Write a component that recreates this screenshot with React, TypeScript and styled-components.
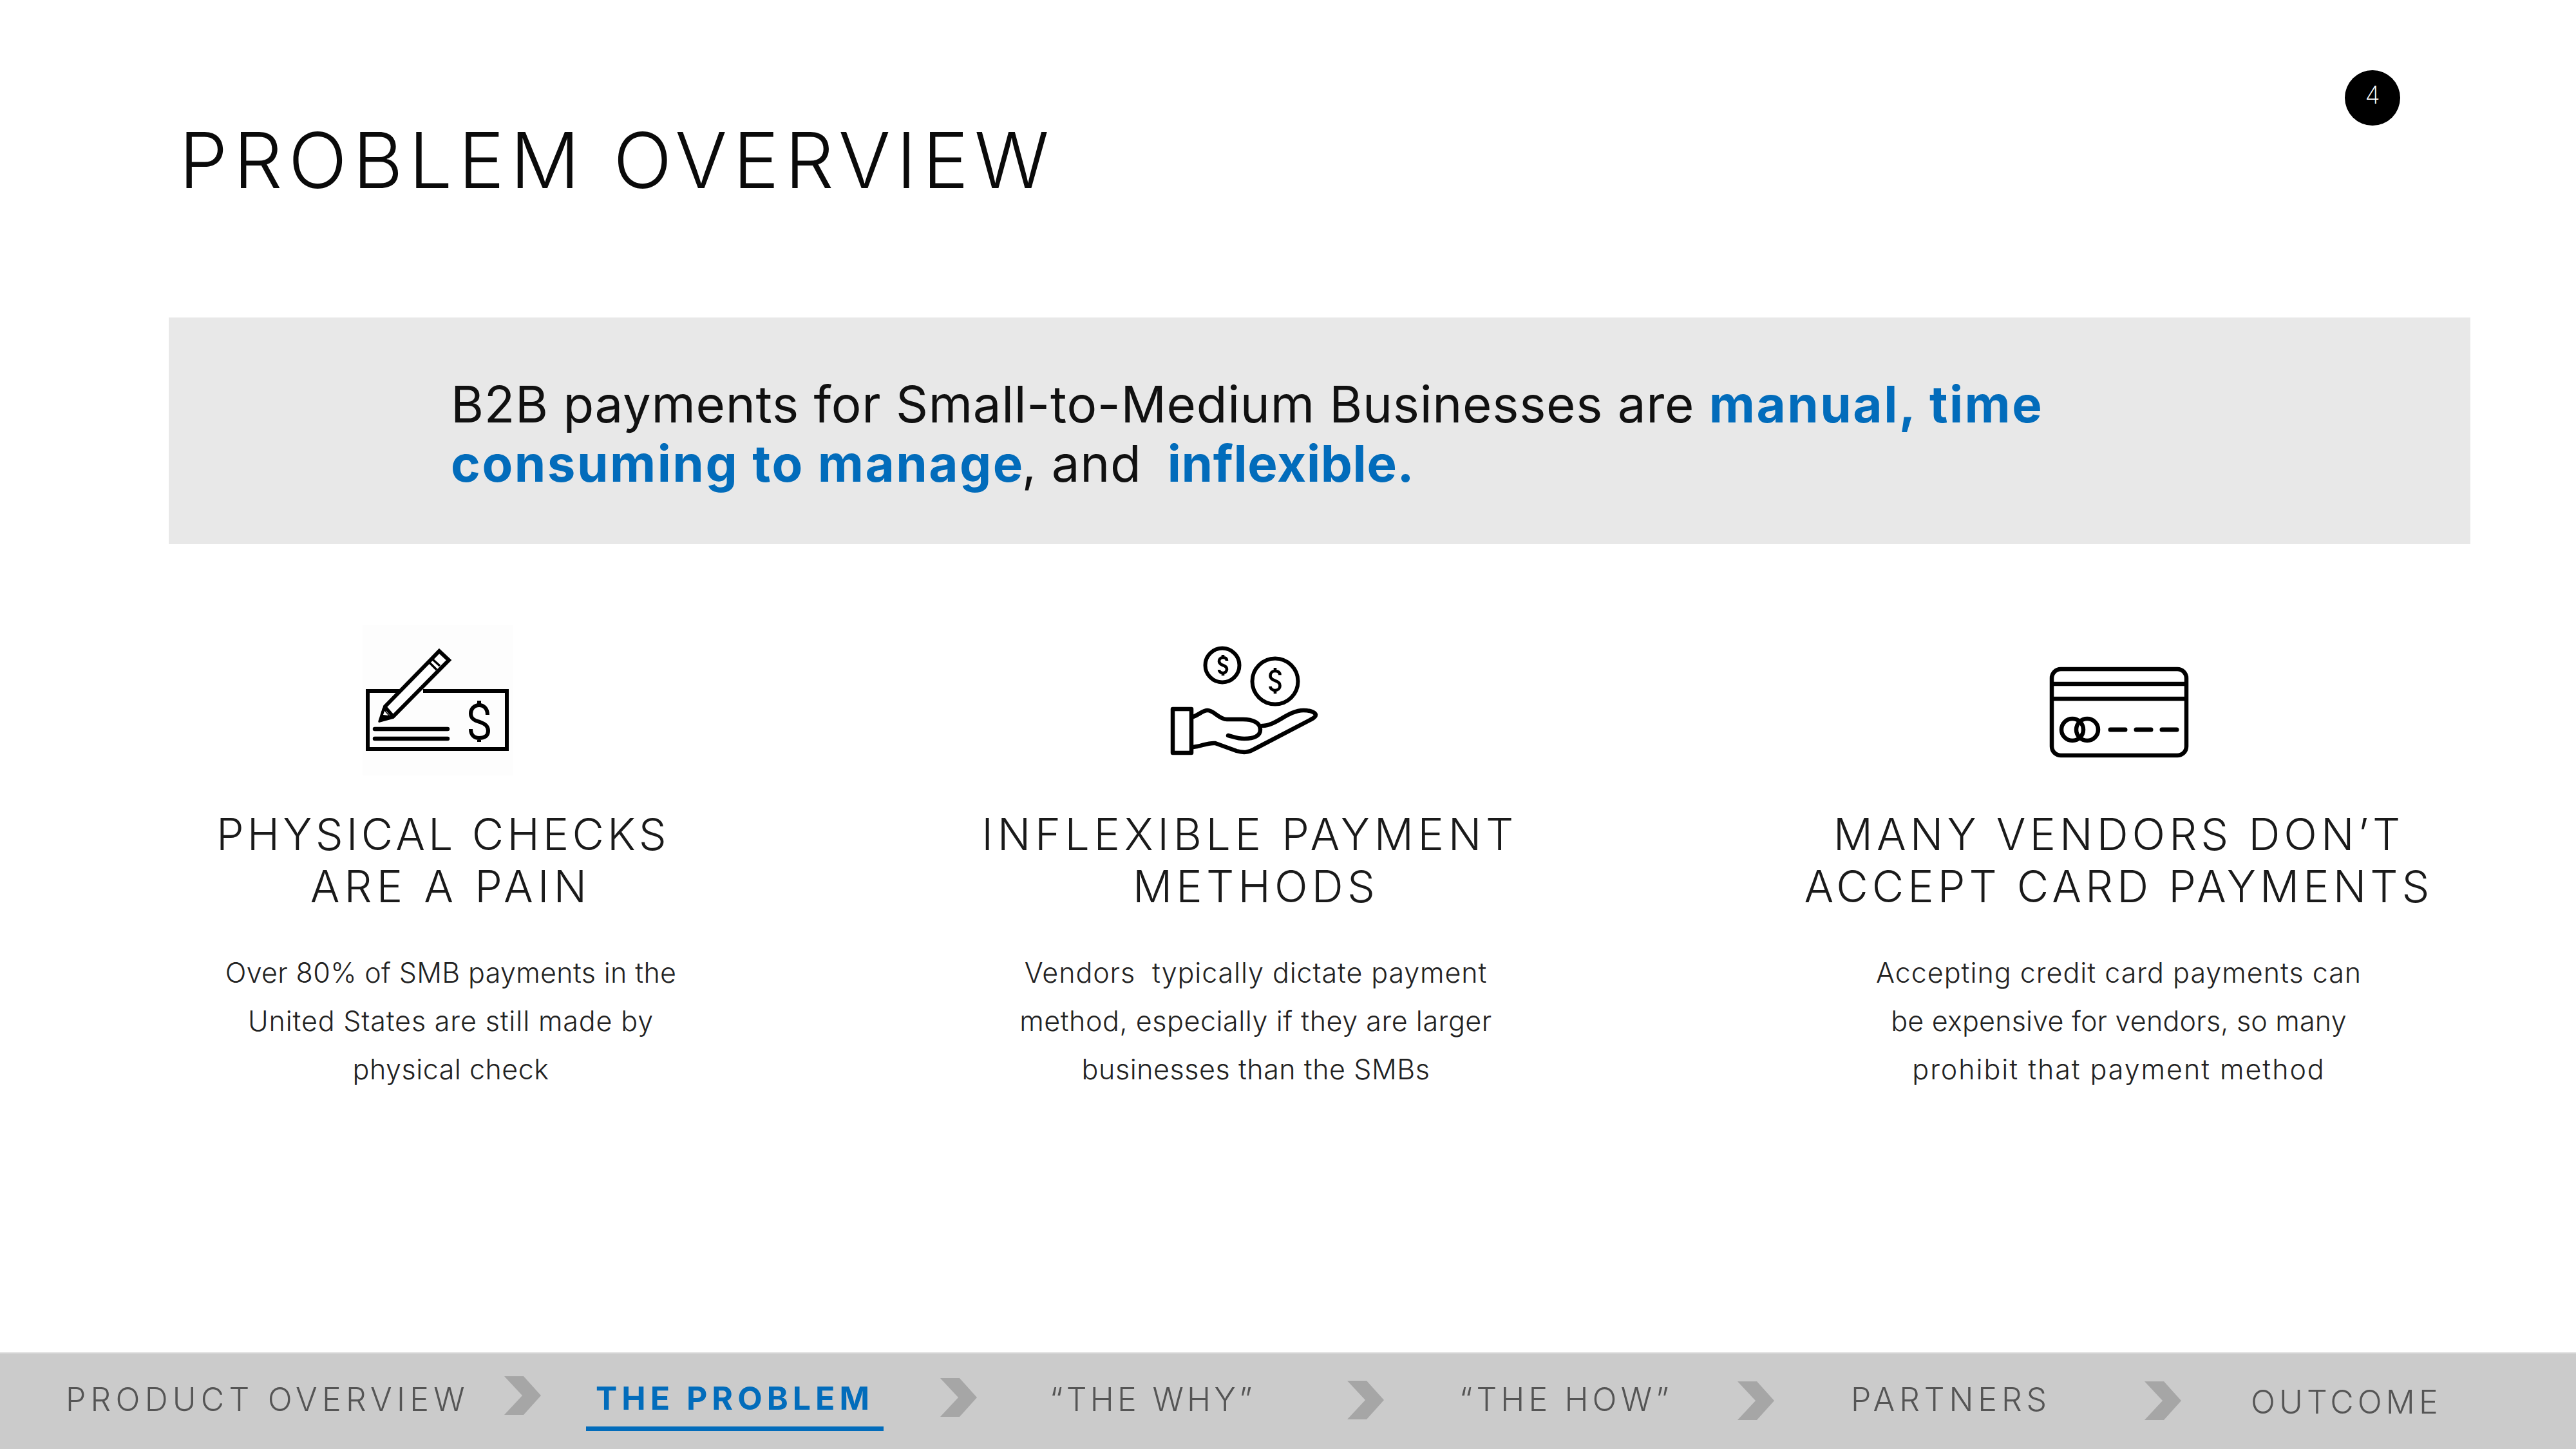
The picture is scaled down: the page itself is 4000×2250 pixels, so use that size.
import React from "react";
import styled, { createGlobalStyle } from "styled-components";

const Global = createGlobalStyle`
  html, body { margin: 0; padding: 0; background: #fff; }
  body { font-family: Inter, "Open Sans", sans-serif; }
`;
const Page = styled.div`
  width: 4000px; height: 2250px; display: flex; flex-direction: column; overflow: hidden; background: #fff;
`;
const Header = styled.header`
  height: 493px; display: flex; align-items: flex-start; padding-left: 278px; box-sizing: border-box; flex: none;
`;
const Title = styled.h1`
  margin: 184px 0 0; font-size: 120px; line-height: 130px; font-weight: 300; color: #0a0a0a; letter-spacing: 9.1px; white-space: nowrap;
`;
const PageBadge = styled.div`
  width: 86px; height: 86px; border-radius: 50%; background: #000; color: #fff; margin: 109px 273px 0 auto;
  display: flex; align-items: center; justify-content: center; font-size: 38px; font-weight: 200;
  padding-bottom: 10px; box-sizing: border-box;
`;
const Band = styled.section`
  flex: none; height: 352px; margin: 0 164px 0 262px; background: #e8e8e8; box-sizing: border-box; padding: 89px 0 0 438px;
  font-size: 78px; line-height: 92px; color: #111; letter-spacing: 0.7px; white-space: nowrap;
`;
const Em = styled.b<{ $ls?: number; $ml?: number }>`
  color: #026cbb; font-weight: 700; letter-spacing: ${(p) => p.$ls ?? 2.5}px; margin-left: ${(p) => p.$ml ?? 0}px;
`;
const Joiner = styled.span`
  margin-left: -4px;
`;
const Columns = styled.section`
  flex: 1; display: flex; align-items: flex-start;
`;
const Column = styled.article<{ $left: number }>`
  width: 1000px; flex: none; margin-left: ${(p) => p.$left}px; display: flex; flex-direction: column; align-items: center;
`;
const IconSlot = styled.div<{ $top: number; $shift?: number }>`
  height: ${(p) => 410 - p.$top}px; padding-top: ${(p) => p.$top}px; margin-right: ${(p) => p.$shift ?? 0}px;
`;
const ColumnTitle = styled.h2`
  margin: 0; font-size: 68px; line-height: 81px; font-weight: 300; color: #1a1a1a; text-align: center; white-space: nowrap;
`;
const TitleLine = styled.span<{ $ls: number }>`
  display: block; letter-spacing: ${(p) => p.$ls}px;
`;
const ColumnBody = styled.div`
  margin-top: 56px; font-size: 43px; line-height: 75px; font-weight: 300; color: #222; text-align: center; white-space: nowrap;
`;
const BodyLine = styled.span<{ $ls: number }>`
  display: block; letter-spacing: ${(p) => p.$ls}px;
`;
const Footer = styled.nav`
  flex: none; height: 150px; background: #cbcbcb; border-top: 2px solid #d6d6d6; box-sizing: border-box; display: flex; align-items: flex-start;
`;
const NavLabel = styled.div<{ $left: number; $w: number; $top: number; $ls: number; $active?: boolean }>`
  flex: none; width: ${(p) => p.$w}px; margin-left: ${(p) => p.$left}px; margin-top: ${(p) => p.$top}px; font-size: 50px; line-height: 60px;
  font-weight: ${(p) => (p.$active ? 700 : 300)}; color: ${(p) => (p.$active ? "#026cbb" : "#555")};
  letter-spacing: ${(p) => p.$ls}px; white-space: nowrap; position: relative;
`;
const Underline = styled.div`
  position: absolute; left: -15px; width: 462px; top: 74px; height: 7px; background: #026cbb;
`;
const Chevron = styled.svg<{ $top: number }>`
  flex: none; margin-top: ${(p) => p.$top}px;
`;

const Arrow = ({ top }: { top: number }) => (
  <Chevron $top={top} width="57" height="60" viewBox="0 0 57 60">
    <polygon points="0,0 30,0 57,30 30,60 0,60 28,30" fill="#a6a6a6" />
  </Chevron>
);

const CheckIcon = () => (
  <svg width="400" height="280" viewBox="0 0 400 280">
    <rect x="63" y="30" width="234" height="234" fill="#fdfdfd" />
    <g fill="none" stroke="#000">
      <path d="M120 133H71V223H287V133H157" strokeWidth="6" />
      <path d="M92 178L98 157L182 71L197 85L110 173Z" strokeWidth="6" strokeLinejoin="miter" fill="#fff" />
      <path d="M98 158L110 172" strokeWidth="5.5" />
      <path d="M166 88L178 100M172 84L183 94" strokeWidth="3.5" />
      <path d="M82 192H195M82 207H195" strokeWidth="6.5" strokeLinecap="round" />
      <path d="M257 170C257 161 252 155 244 155C236 155 231 161 231 168C231 176 237 179 245 181C253 184 258 187 258 195C258 203 252 206 244 206C236 206 231 201 231 192M244 148V155M244 206V212" strokeWidth="6" />
    </g>
    <path d="M87 181L94 159L108 174Z" fill="#000" />
    <path d="M95 170L97 164L103 171Z" fill="#fff" />
  </svg>
);

const CoinS = ({ x, y, k }: { x: number; y: number; k: number }) => (
  <path
    transform={`translate(${x} ${y}) scale(${k})`}
    d="M6 -7C6 -11 3 -12 0 -12C-4 -12 -6 -9 -6 -6C-6 -2 -2 -1 0 0C3 1 6 3 6 6C6 10 3 12 0 12C-3 12 -6 10 -6 7M0 -12V-16M0 12V16"
    fill="none" stroke="#000" strokeWidth={4.6 / k}
  />
);

const HandIcon = () => (
  <svg width="320" height="220" viewBox="0 0 320 220">
    <g fill="none" stroke="#000" strokeLinecap="round" strokeLinejoin="round">
      <circle cx="138" cy="63" r="26.5" strokeWidth="6" />
      <circle cx="220" cy="88" r="35.5" strokeWidth="6" />
      <rect x="61" y="131" width="29" height="68" strokeWidth="6.5" />
      <path d="M93 143C103 139 108 133 115 133C125 133 133 147 145 147H170C185 147 197 152 197 163C197 172 188 177 172 177C162 177 155 174 147 172" strokeWidth="6.5" />
      <path d="M200 157C220 158 240 133 264 133C272 133 282 135 283 140C283 143 280 145 276 147L188 193C178 199 170 199 160 196L127 184C115 183 105 189 93 190" strokeWidth="6.5" />
    </g>
    <CoinS x={139} y={63} k={1} />
    <CoinS x={220} y={87} k={1.25} />
  </svg>
);

const CardIcon = () => (
  <svg width="300" height="200" viewBox="0 0 300 200">
    <g fill="none" stroke="#000" strokeWidth="6.5">
      <rect x="46" y="39" width="209" height="134" rx="14" />
      <path d="M46 62H255M46 85H255" />
      <circle cx="78" cy="133" r="17" />
      <circle cx="101" cy="133" r="17" />
      <path d="M137 133H160M177 133H200M217 133H240" strokeLinecap="round" strokeWidth="7" />
    </g>
  </svg>
);

const cols = [
  { left: 200, top: 0, icon: <CheckIcon />, title: [["PHYSICAL CHECKS\u00A0", 5.1], ["ARE A PAIN", 7]], body: [["Over 80% of SMB payments in the", 0.35], ["United States are still made by", 0.85], ["physical check", 0.5]] },
  { left: 250, top: 30, shift: 60, icon: <HandIcon />, title: [["INFLEXIBLE PAYMENT\u2009", 6.6], ["METHODS", 6.2]], body: [["Vendors\u00A0 typically dictate payment", 0.9], ["method, especially if they are larger", 0.55], ["businesses than the SMBs", 0.55]] },
  { left: 340, top: 60, icon: <CardIcon />, title: [["MANY VENDORS DON’T", 6], ["ACCEPT CARD PAYMENTS", 6]], body: [["Accepting credit card payments can", 1], ["be expensive for vendors, so many", 0.2], ["prohibit that payment method", 1.95]] },
] as const;

export default function App() {
  return (
    <Page>
      <Global />
      <Header>
        <Title>PROBLEM OVERVIEW</Title>
        <PageBadge>4</PageBadge>
      </Header>
      <Band>
        B2B payments for Small-to-Medium Businesses are <Em>manual, time</Em>
        <br />
        <Em>consuming to manage</Em><Joiner>, and&nbsp; </Joiner><Em $ls={0.7} $ml={-5}>inflexible.</Em>
      </Band>
      <Columns>
        {cols.map((c) => (
          <Column key={c.title[0][0]} $left={c.left}>
            <IconSlot $top={95 + c.top} $shift={"shift" in c ? c.shift : 0}>{c.icon}</IconSlot>
            <ColumnTitle>
              {c.title.map(([t, ls]) => <TitleLine key={t} $ls={ls}>{t}</TitleLine>)}
            </ColumnTitle>
            <ColumnBody>
              {c.body.map(([t, ls]) => <BodyLine key={t} $ls={ls}>{t}</BodyLine>)}
            </ColumnBody>
          </Column>
        ))}
      </Columns>
      <Footer>
        <NavLabel $left={102} $w={681} $top={41} $ls={7.2}>PRODUCT OVERVIEW</NavLabel>
        <Arrow top={35} />
        <NavLabel $left={85} $w={535} $top={39} $ls={7} $active>THE PROBLEM<Underline /></NavLabel>
        <Arrow top={38} />
        <NavLabel $left={113} $w={462} $top={41} $ls={5.3}>“THE WHY”</NavLabel>
        <Arrow top={42} />
        <NavLabel $left={117} $w={432} $top={41} $ls={6.1}>“THE HOW”</NavLabel>
        <Arrow top={43} />
        <NavLabel $left={119} $w={456} $top={41} $ls={6.9}>PARTNERS</NavLabel>
        <Arrow top={43} />
        <NavLabel $left={108} $w={400} $top={45} $ls={6.1}>OUTCOME</NavLabel>
      </Footer>
    </Page>
  );
}
